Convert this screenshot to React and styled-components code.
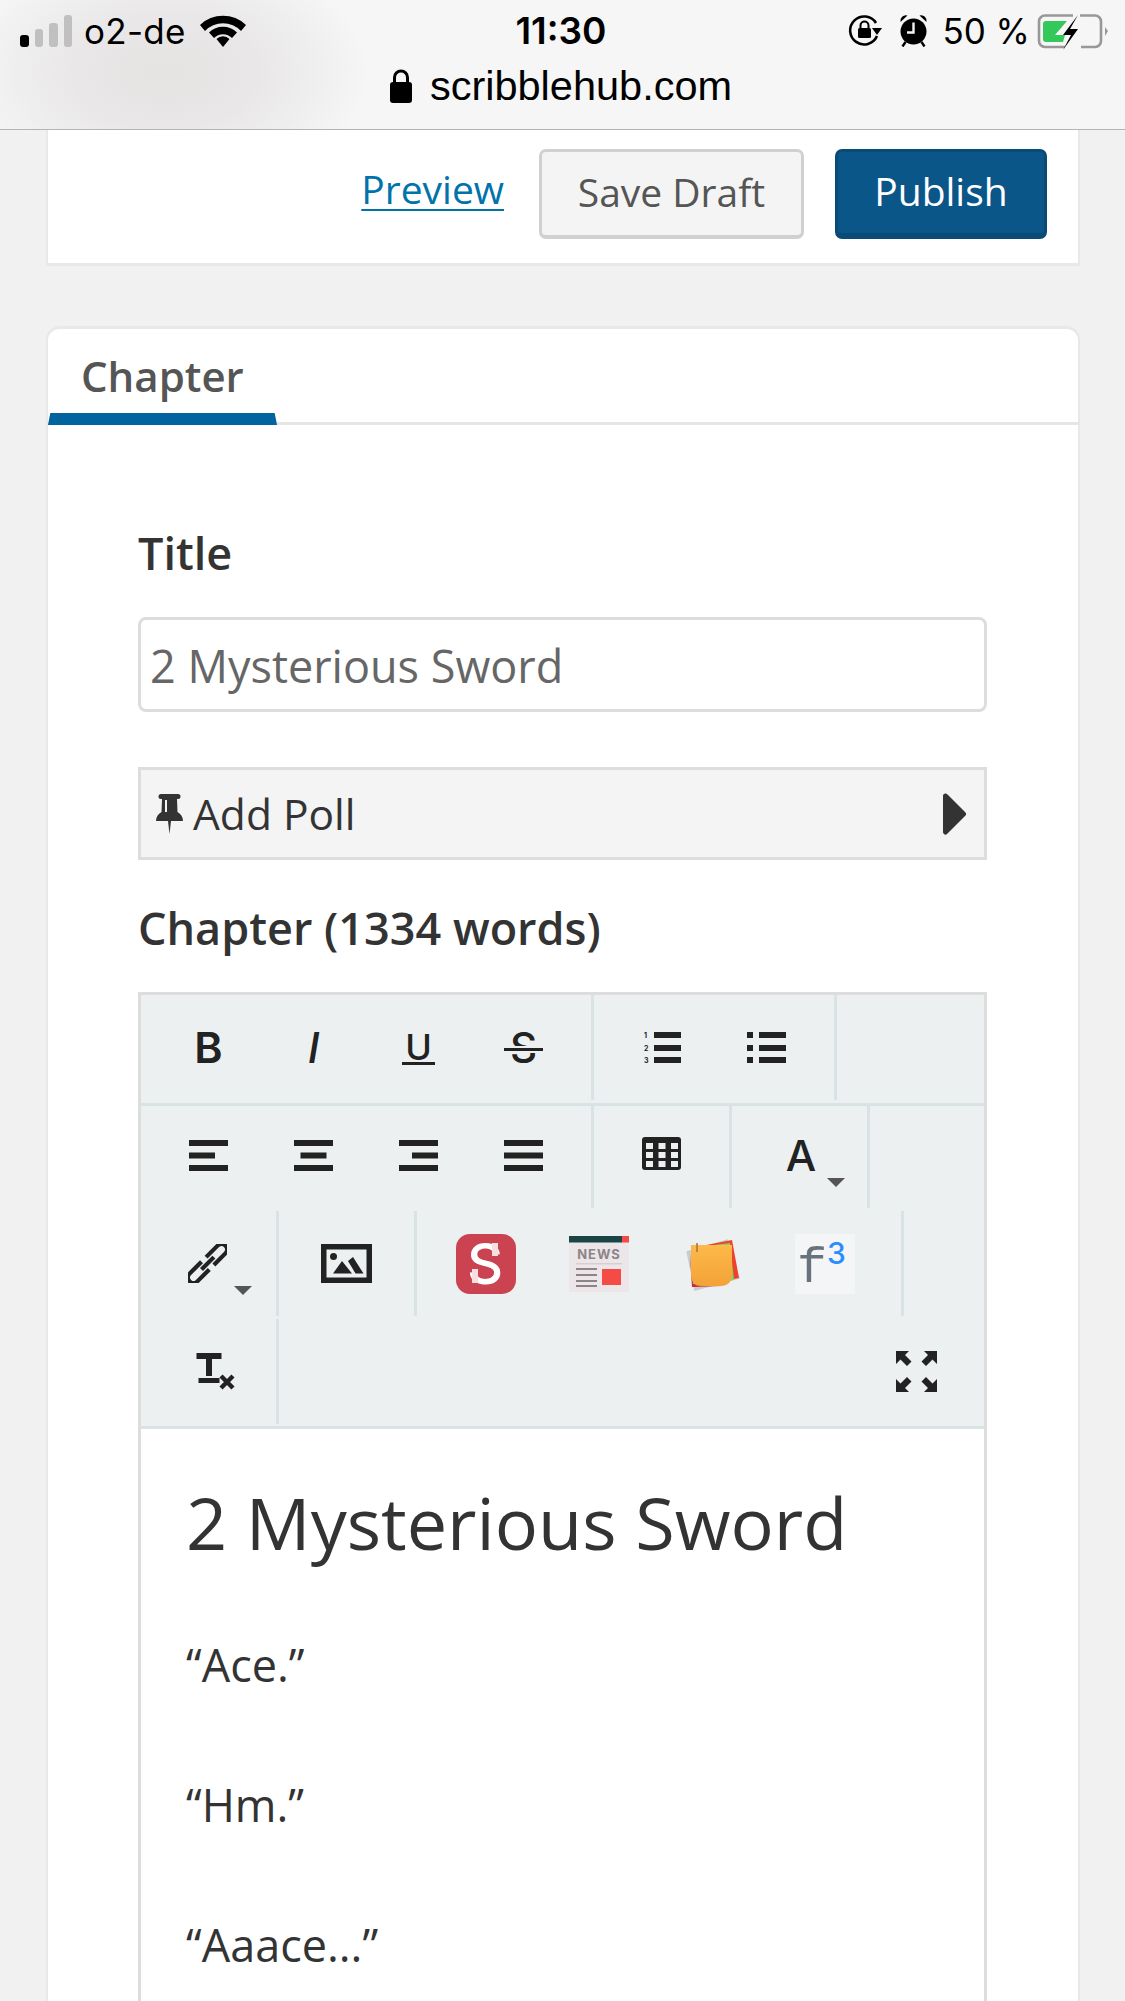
import React from 'react';
import styled, { createGlobalStyle } from 'styled-components';

const Global = createGlobalStyle`
  html, body {
    margin: 0;
    padding: 0;
    background: #f1f1f1;
  }
  body {
    font-family: "Open Sans", "Noto Sans", sans-serif;
    color: #333;
  }
`;

const Page = styled.div`
  width: 1125px;
  height: 2001px;
  overflow: hidden;
  background: #f1f1f1;
`;

/* ios status + url bar */
const TopBar = styled.header`
  height: 129px;
  box-sizing: content-box;
  border-bottom: 1px solid #b4b4b4;
  background: radial-gradient(ellipse 205px 125px at 165px 72px, #e5e2e2 0%, #e9e7e7 45%, #f6f6f6 100%);
  font-family: Inter, "Liberation Sans", sans-serif;
  color: #000;
`;

const StatusRow = styled.div`
  display: grid;
  grid-template-columns: 1fr auto 1fr;
  align-items: center;
  height: 61px;
  padding: 0 20px 0 17px;
`;

const StatusLeft = styled.div`
  display: flex;
  align-items: center;
  margin-left: 3px;
`;

const StatusRight = styled.div`
  display: flex;
  align-items: center;
  justify-content: flex-end;
  margin-right: -3px;
`;

const SignalBars = styled.div`
  display: flex;
  align-items: flex-end;
  gap: 6px;
  height: 32px;
  margin-right: 12px;
  margin-top: 1px;
`;

const Bar = styled.span`
  width: 8.5px;
  height: ${p => p.$h}px;
  border-radius: 3px;
  background: ${p => (p.$on ? '#000' : '#c0c0c0')};
`;

const Carrier = styled.span`
  font-size: 35px;
  line-height: 1;
  letter-spacing: 0.3px;
  margin: 2px 14px 0 0;
`;

const Clock = styled.span`
  font-size: 37px;
  font-weight: 600;
  line-height: 1;
`;

const Percent = styled.span`
  font-size: 35px;
  line-height: 1;
  margin: 2px 7px 0 14px;
`;

const UrlRow = styled.div`
  display: flex;
  justify-content: center;
  align-items: center;
  gap: 18px;
  height: 49px;
  font-family: "Liberation Sans", Arial, sans-serif;
  font-size: 41.5px;
  line-height: 1;
  padding-right: 3px;
`;

const Card = styled.section`
  margin: ${p => p.$top}px 45px 0 46px;
  background: #fff;
  border: 2px solid #e8e8e8;
  border-top-width: ${p => (p.$open ? 0 : 3)}px;
  border-bottom-width: 3px;
  border-radius: ${p => (p.$open ? '0' : '14px 14px 0 0')};
`;

const ActionRow = styled.div`
  display: flex;
  justify-content: flex-end;
  align-items: center;
  padding: 19px 31px 24px 0;
`;

const PreviewLink = styled.a`
  font-size: 39px;
  line-height: 1;
  color: #0073aa;
  text-decoration: underline;
  text-decoration-thickness: 2px;
  text-underline-offset: 5px;
  margin-right: 35px;
  margin-top: -12px;
`;

const Button = styled.button`
  box-sizing: border-box;
  height: 90px;
  width: ${p => p.$w}px;
  margin-left: ${p => p.$gap || 0}px;
  padding: 0 0 5px;
  font-family: inherit;
  font-size: 39px;
  border-radius: 7px;
  border: 3px solid ${p => (p.$primary ? '#0a4a77' : '#d0d0d0')};
  border-bottom-width: ${p => (p.$primary ? 6 : 4)}px;
  background: ${p => (p.$primary ? '#0a5688' : '#f4f4f4')};
  color: ${p => (p.$primary ? '#fff' : '#555')};
`;

const TabBar = styled.div`
  height: 93px;
  border-bottom: 3px solid #e6e6e6;
  display: flex;
`;

const Tab = styled.div`
  position: relative;
  box-sizing: border-box;
  width: 229px;
  padding: 19px 0 0 33px;
  font-size: 42px;
  font-weight: 600;
  line-height: 56px;
  color: #555;
  &::after {
    content: '';
    position: absolute;
    left: 0;
    right: 0;
    bottom: -3px;
    height: 12px;
    background: #01649f;
    clip-path: polygon(1% 0, 99% 0, 100% 100%, 0 100%);
  }
`;

const Form = styled.div`
  padding: 100px 91px 0 90px;
`;

const FieldLabel = styled.label`
  display: block;
  font-size: 45px;
  font-weight: 600;
  line-height: 56px;
  color: #333;
`;

const TitleInput = styled.div`
  box-sizing: border-box;
  height: 95px;
  margin-top: 36px;
  padding-left: 9px;
  border: 3px solid #ddd;
  border-radius: 8px;
  font-size: 45px;
  line-height: 92px;
  color: #666;
`;

const PollBar = styled.div`
  box-sizing: border-box;
  height: 93px;
  margin: 55px 0 40px;
  padding: 0 17px 0 15px;
  display: flex;
  align-items: center;
  background: #f4f4f4;
  border: 3px solid #ddd;
  font-size: 42.5px;
  color: #333;
`;

const PollTitle = styled.span`
  flex: 1;
  margin-left: 10px;
`;

const Editor = styled.div`
  margin-top: 36px;
  border: 3px solid #ddd;
  border-bottom: 0;
`;

const Toolbar = styled.div`
  background: #ecf0f1;
  border-bottom: 3px solid #d9e2e4;
  padding-bottom: 2px;
`;

const ToolRow = styled.div`
  box-sizing: border-box;
  display: flex;
  height: ${p => p.$h}px;
  padding-bottom: ${p => (p.$plain ? 0 : 3)}px;
  border-bottom: ${p => (p.$line ? '3px solid #d9e2e4' : '0')};
`;

const ToolGroup = styled.div`
  display: flex;
  padding: 0 ${p => p.$right ?? 15}px 0 ${p => p.$left ?? 15}px;
  border-right: 3px solid #d9e2e4;
`;

const ToolButton = styled.div`
  position: relative;
  box-sizing: border-box;
  width: ${p => p.$w || 105}px;
  padding-bottom: ${p => p.$lift || 0}px;
  display: flex;
  align-items: center;
  justify-content: center;
  color: #222;
  font-family: Inter, "Liberation Sans", sans-serif;
`;

const FullscreenButton = styled(ToolButton)`
  margin-left: auto;
  margin-right: 15px;
`;

const Caret = styled.span`
  position: absolute;
  left: ${p => p.$left}px;
  top: ${p => p.$top}px;
  width: 0;
  height: 0;
  border-left: 9px solid transparent;
  border-right: 9px solid transparent;
  border-top: 9px solid #555;
`;

const BoldGlyph = styled.span`
  font-size: 43px;
  font-weight: 600;
  line-height: 1;
`;

const ItalicGlyph = styled.span`
  font-size: 43px;
  font-weight: 500;
  font-style: italic;
  line-height: 1;
`;

const UnderlineGlyph = styled.span`
  font-size: 36px;
  font-weight: 500;
  line-height: 30px;
  padding: 0 3px;
  border-bottom: 3px solid #222;
  margin-top: 1px;
`;

const StrikeGlyph = styled.span`
  position: relative;
  font-size: 42px;
  font-weight: 500;
  line-height: 1;
  &::after {
    content: '';
    position: absolute;
    left: -6px;
    right: -6px;
    top: 21px;
    height: 3px;
    background: #222;
    box-shadow: 0 -2px 0 #ecf0f1, 0 2px 0 #ecf0f1;
  }
`;

const ColorGlyph = styled.span`
  font-size: 43px;
  font-weight: 500;
  line-height: 1;
  margin-left: 3px;
`;

const EditorBody = styled.div`
  background: #fff;
  padding: 43px 40px 200px 45px;
`;

const ChapterHeading = styled.h1`
  margin: 0;
  font-size: 72px;
  font-weight: 400;
  line-height: 100px;
  color: #333;
`;

const Line = styled.p`
  margin: 70px 0 0;
  font-size: 45px;
  line-height: 70px;
  color: #333;
  &:first-of-type {
    margin-top: 58px;
  }
`;

const SignalIcon = () => (
  <SignalBars>
    <Bar $on $h={12} />
    <Bar $h={18} />
    <Bar $h={24} />
    <Bar $h={32} />
  </SignalBars>
);

const WifiIcon = () => (
  <svg width="46" height="33" viewBox="0 0 46 33">
    <path d="M0 11 A33 33 0 0 1 46 11 L41 17 A25 25 0 0 0 5 17 Z" fill="#000" />
    <path d="M9 20.5 A20 20 0 0 1 37 20.5 L32 26 A12.5 12.5 0 0 0 14 26 Z" fill="#000" transform="translate(0 -2)" />
    <path d="M16.5 25 A9 9 0 0 1 29.5 25 L23 33 Z" fill="#000" />
  </svg>
);

const RotationLockIcon = () => (
  <svg width="34" height="34" viewBox="0 0 34 34" style={{ marginRight: 17 }}>
    <path d="M29 22 A14 14 0 1 1 28 9" fill="none" stroke="#000" strokeWidth="2.6" />
    <path d="M24 14 L34 14 L29 21 Z" fill="#000" />
    <rect x="10" y="14" width="13" height="10" rx="1.5" fill="#000" />
    <path d="M12.5 14 V11.5 A4 4 0 0 1 20.5 11.5 V14" fill="none" stroke="#000" strokeWidth="2" />
  </svg>
);

const AlarmIcon = () => (
  <svg width="29" height="33" viewBox="0 0 28 33">
    <circle cx="14" cy="17.5" r="13" fill="#000" />
    <path d="M1 8 A5.5 5.5 0 0 1 8 1.5 Z M27 8 A5.5 5.5 0 0 0 20 1.5 Z" fill="#000" />
    <path d="M6 28 L3 32.5 M22 28 L25 32.5" stroke="#000" strokeWidth="2.4" />
    <path d="M14 8.5 V18.5 H7.5" fill="none" stroke="#f4f4f4" strokeWidth="2.4" />
  </svg>
);

const BatteryIcon = () => (
  <svg width="71" height="36" viewBox="0 0 71 36" style={{ marginTop: 2 }}>
    <path d="M36 1.5 H8 A6 6 0 0 0 2 7.5 V27 A6 6 0 0 0 8 33 H28 M44 33 H58 A6 6 0 0 0 64 27 V7.5 A6 6 0 0 0 58 1.5 H43" fill="none" stroke="#989898" strokeWidth="2.6" />
    <path d="M68 13 L71 17 L68 22 Z" fill="#989898" />
    <path d="M9 7 H30 L18 21 H28 L26 28 H9 A3 3 0 0 1 6 25 V10 A3 3 0 0 1 9 7 Z" fill="#34c85a" />
    <path d="M41 1 L26 21 H34 L26 36 L41 15 H33 Z" fill="#000" />
  </svg>
);

const LockIcon = () => (
  <svg width="22" height="34" viewBox="0 0 22 34">
    <rect x="0" y="13" width="22" height="21" rx="3" fill="#000" />
    <path d="M4.5 14 V8.5 A6.5 6.5 0 0 1 17.5 8.5 V14" fill="none" stroke="#000" strokeWidth="3" />
  </svg>
);

const PinIcon = () => (
  <svg width="27" height="40" viewBox="0 0 27 40">
    <path d="M5 0 H22 A2 2 0 0 1 22 5 H21 L21.5 18 C25 20 27 23 27 27 H15 L13.5 40 L12 27 H0 C0 23 2 20 5.5 18 L6 5 H5 A2 2 0 0 1 5 0 Z" fill="#333" />
    <rect x="9" y="6" width="2" height="12" fill="#f4f4f4" />
  </svg>
);

const ArrowIcon = () => (
  <svg width="24" height="42" viewBox="0 0 24 42">
    <path d="M3 3 L21 21 L3 39 Z" fill="#333" stroke="#333" strokeWidth="5" strokeLinejoin="round" transform="translate(-0.5 0)" />
  </svg>
);

const AlignIcon = ({ mid }) => (
  <svg width="39" height="31" viewBox="0 0 39 31" fill="#222">
    <rect x="0" y="0" width="39" height="6" />
    <rect x={mid[0]} y="12.5" width={mid[1]} height="6" />
    <rect x="0" y="25" width="39" height="6" />
  </svg>
);

const NumListIcon = () => (
  <svg width="39" height="32" viewBox="0 0 39 32" fill="#222">
    <rect x="12" y="0" width="27" height="6" />
    <rect x="12" y="13" width="27" height="6" />
    <rect x="12" y="25" width="27" height="6" />
    <text x="2" y="6" fontSize="7" fontWeight="700" fontFamily="Inter, sans-serif">1</text>
    <text x="2" y="19" fontSize="7" fontWeight="700" fontFamily="Inter, sans-serif">2</text>
    <text x="2" y="31" fontSize="7" fontWeight="700" fontFamily="Inter, sans-serif">3</text>
  </svg>
);

const BulletListIcon = () => (
  <svg width="39" height="32" viewBox="0 0 39 32" fill="#222">
    <rect x="0" y="0" width="6" height="6" />
    <rect x="0" y="13" width="6" height="6" />
    <rect x="0" y="25" width="6" height="6" />
    <rect x="12" y="0" width="27" height="6" />
    <rect x="12" y="13" width="27" height="6" />
    <rect x="12" y="25" width="27" height="6" />
  </svg>
);

const TableIcon = () => (
  <svg width="39" height="33" viewBox="0 0 39 33">
    <rect width="39" height="33" rx="3" fill="#222" />
    {[4, 16.5, 29].map(x =>
      [6, 15, 24].map(y => <rect key={`${x}-${y}`} x={x} y={y} width="7" height="6" fill="#ecf0f1" />)
    )}
  </svg>
);

const LinkIcon = () => (
  <svg width="39" height="39" viewBox="0 0 39 39" fill="none" stroke="#222" strokeWidth="4.2" style={{ marginLeft: -2 }}>
    <g transform="rotate(-45 19.5 19.5)">
      <path d="M23 14 H39.3 A5.5 5.5 0 0 1 39.3 25 H23" />
      <path d="M16.5 25 H-0.3 A5.5 5.5 0 0 1 -0.3 14 H16.5" />
      <path d="M11 19.5 H28.5" />
    </g>
  </svg>
);

const ImageIcon = () => (
  <svg width="51" height="39" viewBox="0 0 51 39">
    <rect x="2.75" y="2.75" width="45.5" height="33.5" fill="none" stroke="#222" strokeWidth="5.5" />
    <circle cx="12.5" cy="12.5" r="3.5" fill="#222" />
    <path d="M12 29.5 L21 17 L31 29.5 Z M27 17 L32 13 L42.5 29.5 H34.5 Z" fill="#222" />
  </svg>
);

const ScribbleLogo = () => (
  <svg width="60" height="60" viewBox="0 0 60 60">
    <rect width="60" height="60" rx="14" fill="#cb4350" />
    <text x="29" y="50" textAnchor="middle" fontSize="56" fontWeight="500" fontFamily="Inter, sans-serif" fill="#fff">S</text>
    <rect x="36" y="9" width="6" height="13" fill="#f7dfe1" />
    <rect x="16" y="35" width="6" height="14" fill="#f7dfe1" />
  </svg>
);

const NewsLogo = () => (
  <svg width="60" height="56" viewBox="0 0 60 56">
    <rect width="60" height="56" fill="#ece6e9" />
    <rect width="53" height="6.5" fill="#1b4447" />
    <rect x="53" width="7" height="6.5" fill="#f44b45" />
    <text x="30" y="23" textAnchor="middle" fontSize="13" fontWeight="700" letterSpacing="1" fontFamily="Inter, sans-serif" fill="#8e8488">NEWS</text>
    <rect x="7" y="27" width="46" height="1.5" fill="#d5cfd2" />
    {[32, 38, 44, 49].map(y => <rect key={y} x="7" y={y} width="21" height="2" fill="#8e8488" />)}
    <rect x="33" y="33" width="19" height="16" fill="#f44b45" />
  </svg>
);

const NotesLogo = () => (
  <svg width="60" height="60" viewBox="0 0 60 60">
    <defs>
      <linearGradient id="noteFill" x1="0" y1="0" x2="0" y2="1">
        <stop offset="0" stopColor="#fdb949" />
        <stop offset="1" stopColor="#f3a238" />
      </linearGradient>
    </defs>
    <path d="M5 16 L47 6 L57 46 L11 56 Z" fill="#c9cccc" transform="rotate(-3 30 30)" />
    <path d="M9 14 L50 6 L57 44 L12 53 Z" fill="#f0402e" />
    <path d="M9 14 L48 9 L52 46 L10 52 Z" fill="#8fcf5a" />
    <path d="M8 20 L11 50 L40 52 L10 53 Z" fill="#c92a3a" />
    <path d="M9 11 H50 V40 Q50 52 38 52 H19 Q10 52 9 42 Z" fill="url(#noteFill)" />
    <path d="M15 9 V18" stroke="#a8764e" strokeWidth="1.6" />
  </svg>
);

const FormulaLogo = () => (
  <svg width="60" height="60" viewBox="0 0 60 60">
    <rect width="60" height="60" fill="#f4f5f6" />
    <text x="2" y="48" fontSize="50" fontFamily="'Liberation Mono', monospace" fill="#68727c">f</text>
    <text x="32" y="30" fontSize="30" fontWeight="500" fontFamily="Inter, sans-serif" fill="#2a8cff">3</text>
  </svg>
);

const ClearIcon = () => (
  <svg width="52" height="37" viewBox="0 0 52 37" fill="#222">
    <rect x="13.5" y="0" width="25" height="6" />
    <rect x="23" y="0" width="6" height="23" />
    <rect x="15.5" y="25" width="21" height="5" />
    <path d="M38 23 L50 35 M50 23 L38 35" stroke="#222" strokeWidth="4.4" fill="none" />
  </svg>
);

const FullscreenIcon = () => (
  <svg width="41" height="41" viewBox="0 0 41 41" fill="#222">
    <path d="M0 0 H13 L9 4 L15.5 10.5 L11 15 L4.5 8.5 L0 13 Z" />
    <path d="M41 0 H28 L32 4 L25.5 10.5 L30 15 L36.5 8.5 L41 13 Z" />
    <path d="M0 41 H13 L9 37 L15.5 30.5 L11 26 L4.5 32.5 L0 28 Z" />
    <path d="M41 41 H28 L32 37 L25.5 30.5 L30 26 L36.5 32.5 L41 28 Z" />
  </svg>
);

function App() {
  return (
    <Page>
      <Global />
      <TopBar>
        <StatusRow>
          <StatusLeft>
            <SignalIcon />
            <Carrier>o2-de</Carrier>
            <WifiIcon />
          </StatusLeft>
          <Clock>11:30</Clock>
          <StatusRight>
            <RotationLockIcon />
            <AlarmIcon />
            <Percent>50 %</Percent>
            <BatteryIcon />
          </StatusRight>
        </StatusRow>
        <UrlRow>
          <LockIcon />
          <span>scribblehub.com</span>
        </UrlRow>
      </TopBar>

      <Card $open $top={0}>
        <ActionRow>
          <PreviewLink>Preview</PreviewLink>
          <Button $w={265}>Save Draft</Button>
          <Button $primary $w={212} $gap={31}>Publish</Button>
        </ActionRow>
      </Card>

      <Card $top={60}>
        <TabBar>
          <Tab>Chapter</Tab>
        </TabBar>
        <Form>
          <FieldLabel>Title</FieldLabel>
          <TitleInput>2 Mysterious Sword</TitleInput>
          <PollBar>
            <PinIcon />
            <PollTitle>Add Poll</PollTitle>
            <ArrowIcon />
          </PollBar>
          <FieldLabel>Chapter (1334 words)</FieldLabel>
          <Editor>
            <Toolbar>
              <ToolRow $h={111} $line>
                <ToolGroup>
                  <ToolButton><BoldGlyph>B</BoldGlyph></ToolButton>
                  <ToolButton><ItalicGlyph>I</ItalicGlyph></ToolButton>
                  <ToolButton><UnderlineGlyph>U</UnderlineGlyph></ToolButton>
                  <ToolButton><StrikeGlyph>S</StrikeGlyph></ToolButton>
                </ToolGroup>
                <ToolGroup>
                  <ToolButton><NumListIcon /></ToolButton>
                  <ToolButton><BulletListIcon /></ToolButton>
                </ToolGroup>
              </ToolRow>
              <ToolRow $h={105}>
                <ToolGroup>
                  <ToolButton $lift={3}><AlignIcon mid={[0, 26]} /></ToolButton>
                  <ToolButton $lift={3}><AlignIcon mid={[6.5, 26]} /></ToolButton>
                  <ToolButton $lift={3}><AlignIcon mid={[13, 26]} /></ToolButton>
                  <ToolButton $lift={3}><AlignIcon mid={[0, 39]} /></ToolButton>
                </ToolGroup>
                <ToolGroup>
                  <ToolButton $lift={7}><TableIcon /></ToolButton>
                </ToolGroup>
                <ToolGroup>
                  <ToolButton $lift={3}>
                    <ColorGlyph>A</ColorGlyph>
                    <Caret $left={80} $top={72} />
                  </ToolButton>
                </ToolGroup>
              </ToolRow>
              <ToolRow $h={108}>
                <ToolGroup>
                  <ToolButton>
                    <LinkIcon />
                    <Caret $left={78} $top={75} />
                  </ToolButton>
                </ToolGroup>
                <ToolGroup>
                  <ToolButton><ImageIcon /></ToolButton>
                </ToolGroup>
                <ToolGroup $left={12} $right={20}>
                  <ToolButton $w={113}><ScribbleLogo /></ToolButton>
                  <ToolButton $w={113}><NewsLogo /></ToolButton>
                  <ToolButton $w={113}><NotesLogo /></ToolButton>
                  <ToolButton $w={113}><FormulaLogo /></ToolButton>
                </ToolGroup>
              </ToolRow>
              <ToolRow $h={105} $plain>
                <ToolGroup>
                  <ToolButton><ClearIcon /></ToolButton>
                </ToolGroup>
                <FullscreenButton><FullscreenIcon /></FullscreenButton>
              </ToolRow>
            </Toolbar>
            <EditorBody>
              <ChapterHeading>2 Mysterious Sword</ChapterHeading>
              <Line>“Ace.”</Line>
              <Line>“Hm.”</Line>
              <Line>“Aaace...”</Line>
            </EditorBody>
          </Editor>
        </Form>
      </Card>
    </Page>
  );
}

export default App;
